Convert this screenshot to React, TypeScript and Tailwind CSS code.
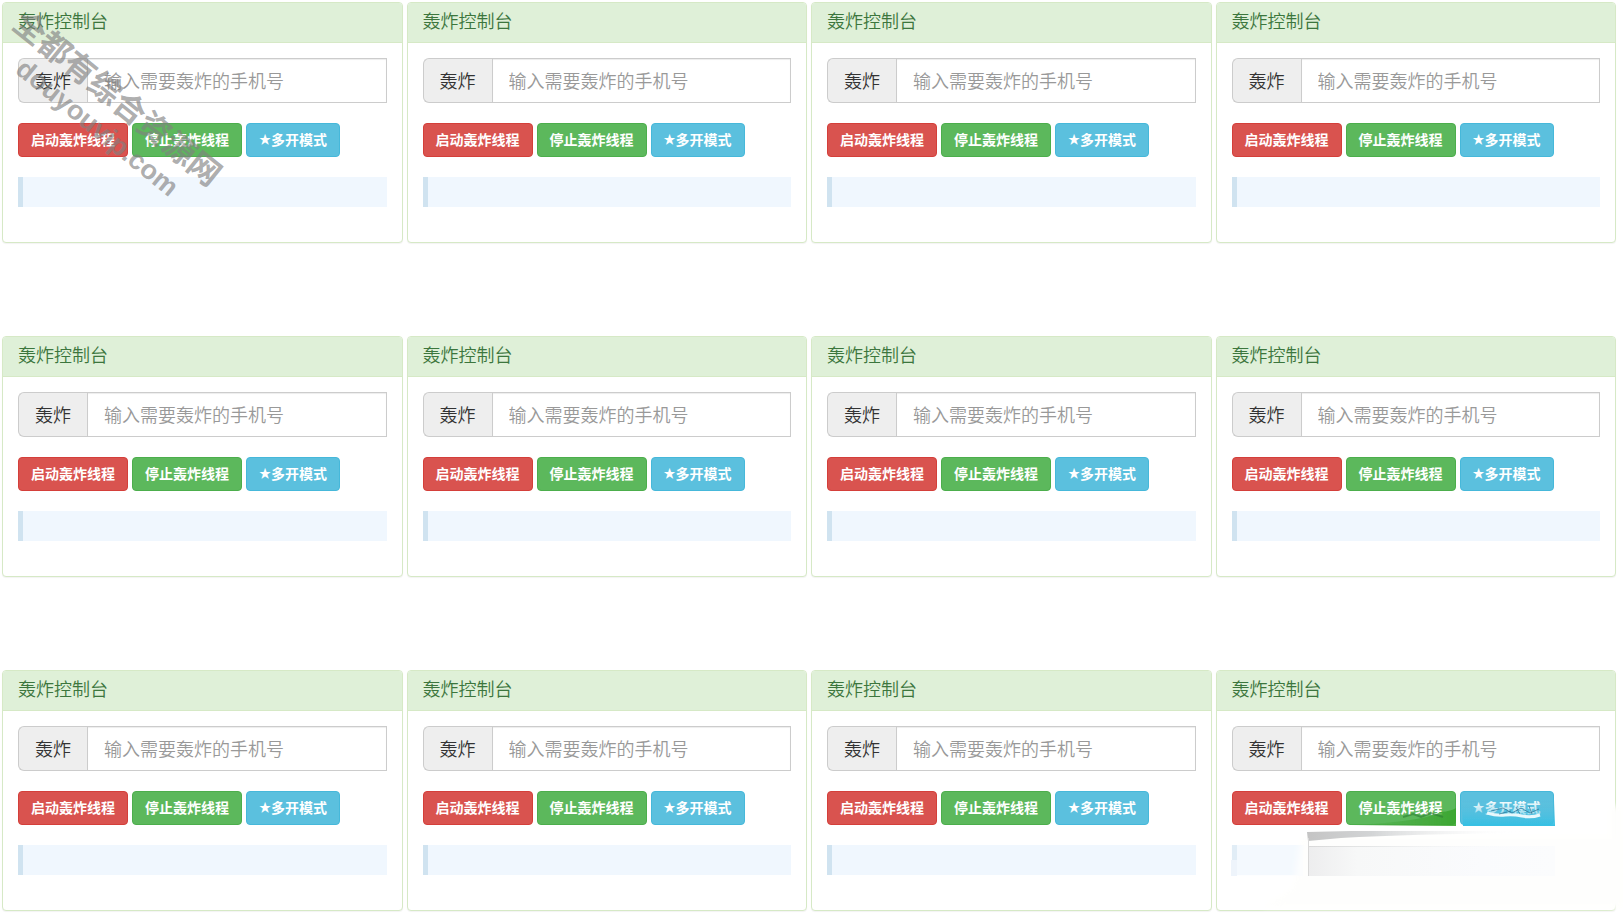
const FONT = "font-['Noto_Sans_CJK_SC',sans-serif]"

const panels = Array.from({ length: 12 }, (_, i) => i + 1)

const buttonBase =
  'flex h-[34px] items-start rounded-[4px] border px-3 pt-[5px] text-sm leading-5 font-bold text-white whitespace-nowrap'

const Smudge = () => (
  <svg
    className="absolute -right-2 -bottom-1 h-[120px] w-[392px] pointer-events-none"
    viewBox="0 0 392 120"
    aria-hidden="true"
  >
    <defs>
      <linearGradient id="bar" x1="0" x2="1">
        <stop offset="0" stopColor="#c4c4c4" />
        <stop offset="0.3" stopColor="#d2d4d5" />
        <stop offset="1" stopColor="#ffffff" stopOpacity="0" />
      </linearGradient>
      <linearGradient id="box" x1="0" x2="1">
        <stop offset="0" stopColor="#ededee" />
        <stop offset="0.2" stopColor="#f7f8f8" />
        <stop offset="0.7" stopColor="#fafbfd" />
        <stop offset="1" stopColor="#fbfcfd" />
      </linearGradient>
      <linearGradient id="green" x1="0" x2="1">
        <stop offset="0" stopColor="#3fa535" stopOpacity="0" />
        <stop offset="0.7" stopColor="#3fa535" stopOpacity="0.7" />
        <stop offset="1" stopColor="#38a52e" stopOpacity="0.9" />
      </linearGradient>
      <linearGradient id="cyan" x1="0" y1="0" x2="0" y2="1">
        <stop offset="0" stopColor="#5bc0de" stopOpacity="0" />
        <stop offset="1" stopColor="#35bfe3" />
      </linearGradient>
      <filter id="veil" x="-10%" y="-20%" width="120%" height="140%">
        <feGaussianBlur stdDeviation="3" />
      </filter>
      <filter id="smear" x="-10%" y="-50%" width="120%" height="200%">
        <feGaussianBlur stdDeviation="0.7" />
      </filter>
    </defs>
    <path d="M70 42H392V113H30L62 94Z" fill="#fefefd" filter="url(#veil)" />
    <path d="M378 12H392V113H378Z" fill="#fefefd" filter="url(#veil)" />
    <path d="M0 51H72V82H0Z" fill="#fbfcfe" fillOpacity="0.4" />
    <path d="M0 66H6V82H0Z" fill="#eef4fb" filter="url(#smear)" />
    <path d="M120 31Q190 28 210 18Q220 17 225 14V32H120Z" fill="url(#green)" filter="url(#smear)" />
    <path d="M172 23l10-3 8 3 10-4 12 4" fill="none" stroke="#2f7f34" strokeOpacity="0.6" strokeWidth="2" filter="url(#smear)" />
    <path d="M230 6H324V32H232Z" fill="url(#cyan)" filter="url(#smear)" />
    <path
      d="M256 19q10 3 18 2t17 1 18-1"
      fill="none"
      stroke="#e8f8fc"
      strokeWidth="3"
      filter="url(#smear)"
    />
    <path
      d="M260 17l12-3 9 5 9-5 9 5 9-4M285 13l4 7M298 12l3 8M268 20l12-3"
      fill="none"
      stroke="#2b6f91"
      strokeOpacity="0.7"
      strokeWidth="1"
    />
    <path d="M77 52H324V82H77Z" fill="url(#box)" />
    <path d="M76 38L120 37H289V39Q180 40 110 44L77 47Z" fill="url(#bar)" filter="url(#smear)" />
    <path d="M77 52H290V53H77Z" fill="url(#bar)" fillOpacity="0.5" />
    <path d="M77 44H78V82H77Z" fill="#d8d8d8" />
  </svg>
)

const Panel = ({ id, smudged }: { id: number; smudged: boolean }) => (
  <section className="relative min-w-0 rounded-[4px] border border-[#d6e9c6] bg-white shadow-[0_1px_1px_rgba(0,0,0,0.05)]">
    <h3 className="h-10 rounded-t-[3px] border-b border-[#d6e9c6] bg-[#dff0d8] px-[15px] text-lg leading-[34px] font-[350] text-[#3c763d]">
      轰炸控制台
    </h3>
    <div className="px-[15px] pt-[15px] pb-[35px]">
      <div className="flex h-[45px]">
        <label
          htmlFor={`phone-${id}`}
          className="flex shrink-0 items-center rounded-l-[6px] border border-r-0 border-[#ccc] bg-[#eee] px-4 pb-[2px] text-lg font-[350] text-[#333]"
        >
          轰炸
        </label>
        <input
          id={`phone-${id}`}
          type="text"
          placeholder="输入需要轰炸的手机号"
          className="min-w-0 flex-1 border border-[#ccc] px-4 pb-[2px] text-lg font-[350] shadow-[inset_0_1px_1px_rgba(0,0,0,0.075)] placeholder:text-[#999]"
        />
      </div>
      <div className="mt-5 flex gap-1">
        <button type="button" className={`${buttonBase} border-[#d43f3a] bg-[#d9534f]`}>启动轰炸线程</button>
        <button type="button" className={`${buttonBase} border-[#4cae4c] bg-[#5cb85c]`}>停止轰炸线程</button>
        <button type="button" className={`${buttonBase} border-[#46b8da] bg-[#5bc0de]`}>
          <span className="text-xs leading-5">★</span>多开模式
        </button>
      </div>
      <div className="mt-5 h-[30px] border-l-[5px] border-[#d0e3f0] bg-[#f0f7fe]" />
    </div>
    {smudged && <Smudge />}
  </section>
)

const Watermark = () => (
  <div className="pointer-events-none absolute top-0 left-0 font-bold whitespace-nowrap text-[#808080]/65">
    <p className="absolute top-[2px] left-[16px] origin-[16px_24px] rotate-[39deg] text-[32px] leading-[48px]">全都有综合资源网</p>
    <p className="absolute top-[54px] left-[18px] origin-[8px_16px] rotate-[39deg] font-['Liberation_Sans',sans-serif] text-[27px] leading-8">
      douyouvip.com
    </p>
  </div>
)

export default function App() {
  return (
    <main className={`${FONT} relative overflow-hidden bg-white pt-[2px] pr-2 pb-[2px] pl-[2px]`}>
      <div className="grid grid-cols-4 gap-x-1 gap-y-[93px]">
        {panels.map((id) => (
          <Panel key={id} id={id} smudged={id === panels.length} />
        ))}
      </div>
      <Watermark />
    </main>
  )
}
